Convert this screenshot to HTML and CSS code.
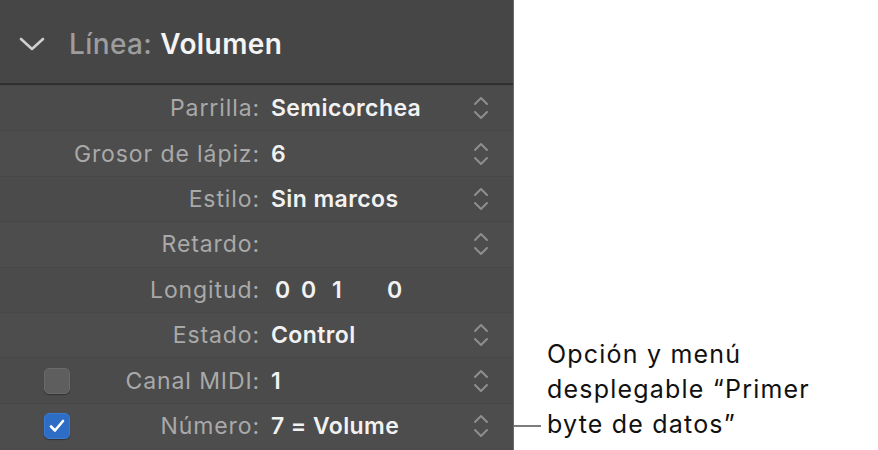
FILE: index.html
```html
<!DOCTYPE html>
<html lang="es">
<head>
    <meta charset="UTF-8">
    <meta name="viewport" content="width=device-width, initial-scale=1.0">
    <title>Línea: Volumen</title>
    <link rel="stylesheet" href="styles.css">
</head>
<body>
    <div class="page">
        <div class="inspector">
            <div class="inspector-head">
                <svg class="disclosure" width="26" height="14" viewBox="0 0 26 14">
                    <path d="M2 2 L13 12 L24 2" fill="none" stroke="#cfcfcf" stroke-width="2.6" stroke-linecap="round" stroke-linejoin="round"/>
                </svg>
                <span class="head-label">Línea:</span>
                <span class="head-value">Volumen</span>
            </div>

            <div class="row">
                <div class="label-cell"><span class="label">Parrilla:</span></div>
                <div class="value">Semicorchea</div>
                <svg class="stepper" width="16" height="24" viewBox="0 0 16 24"><path d="M2 8 L8 2 L14 8 M2 16 L8 22 L14 16" fill="none" stroke="#8e8e8e" stroke-width="2" stroke-linecap="round" stroke-linejoin="round"/></svg>
            </div>
            <div class="row alt">
                <div class="label-cell"><span class="label">Grosor de lápiz:</span></div>
                <div class="value">6</div>
                <svg class="stepper" width="16" height="24" viewBox="0 0 16 24"><path d="M2 8 L8 2 L14 8 M2 16 L8 22 L14 16" fill="none" stroke="#8e8e8e" stroke-width="2" stroke-linecap="round" stroke-linejoin="round"/></svg>
            </div>
            <div class="row">
                <div class="label-cell"><span class="label">Estilo:</span></div>
                <div class="value">Sin marcos</div>
                <svg class="stepper" width="16" height="24" viewBox="0 0 16 24"><path d="M2 8 L8 2 L14 8 M2 16 L8 22 L14 16" fill="none" stroke="#8e8e8e" stroke-width="2" stroke-linecap="round" stroke-linejoin="round"/></svg>
            </div>
            <div class="row alt">
                <div class="label-cell"><span class="label">Retardo:</span></div>
                <div class="value"></div>
                <svg class="stepper" width="16" height="24" viewBox="0 0 16 24"><path d="M2 8 L8 2 L14 8 M2 16 L8 22 L14 16" fill="none" stroke="#8e8e8e" stroke-width="2" stroke-linecap="round" stroke-linejoin="round"/></svg>
            </div>
            <div class="row">
                <div class="label-cell"><span class="label">Longitud:</span></div>
                <div class="value length">
                    <span class="seg">0</span><span class="seg mid">0</span><span class="seg wide">1</span><span class="seg">0</span>
                </div>
                <span></span>
            </div>
            <div class="row alt">
                <div class="label-cell"><span class="label">Estado:</span></div>
                <div class="value">Control</div>
                <svg class="stepper" width="16" height="24" viewBox="0 0 16 24"><path d="M2 8 L8 2 L14 8 M2 16 L8 22 L14 16" fill="none" stroke="#8e8e8e" stroke-width="2" stroke-linecap="round" stroke-linejoin="round"/></svg>
            </div>
            <div class="row">
                <div class="label-cell">
                    <span class="check"></span>
                    <span class="label">Canal MIDI:</span>
                </div>
                <div class="value">1</div>
                <svg class="stepper" width="16" height="24" viewBox="0 0 16 24"><path d="M2 8 L8 2 L14 8 M2 16 L8 22 L14 16" fill="none" stroke="#8e8e8e" stroke-width="2" stroke-linecap="round" stroke-linejoin="round"/></svg>
            </div>
            <div class="row alt">
                <div class="label-cell">
                    <span class="check on">
                        <svg width="18" height="16" viewBox="0 0 18 16"><path d="M3 8.5 L7 12.5 L15 3" fill="none" stroke="#fff" stroke-width="2.6" stroke-linecap="round" stroke-linejoin="round"/></svg>
                    </span>
                    <span class="label">Número:</span>
                </div>
                <div class="value">7 = Volume</div>
                <svg class="stepper" width="16" height="24" viewBox="0 0 16 24"><path d="M2 8 L8 2 L14 8 M2 16 L8 22 L14 16" fill="none" stroke="#8e8e8e" stroke-width="2" stroke-linecap="round" stroke-linejoin="round"/></svg>
            </div>
        </div>

        <div class="note">
            <span class="leader"></span>
            <p>Opción y menú<br>desplegable “Primer<br>byte de datos”</p>
        </div>
    </div>
</body>
</html>
```

FILE: styles.css
```css
body {
    margin: 0;
    background-color: white;
    font-family: Inter, "Noto Sans", sans-serif;
}
.page {
    display: flex;
    width: 878px;
    height: 450px;
    overflow: hidden;
}
.inspector {
    width: 513px;
    height: 450px;
    background-color: #4b4b4b;
    border-right: 1px solid #6b6b6b;
    flex-shrink: 0;
}
.inspector-head {
    height: 85px;
    background-color: #464646;
    border-bottom: 2px solid #2f2f2f;
    box-sizing: border-box;
    display: flex;
    align-items: center;
    padding-left: 19px;
    padding-top: 4px;
}
.disclosure {
    margin-right: 24px;
}
.head-label {
    font-size: 28px;
    font-weight: 500;
    letter-spacing: 0.4px;
    color: #9d9d9d;
    margin-right: 8px;
}
.head-value {
    font-size: 28px;
    font-weight: 600;
    letter-spacing: 0.4px;
    color: #f4f4f4;
}
.row {
    display: grid;
    grid-template-columns: 260px 1fr 16px;
    column-gap: 11px;
    align-items: center;
    height: 45.4px;
    padding-right: 24px;
    border-top: 1px solid #474747;
    box-sizing: border-box;
}
.row.alt {
    background-color: #4d4d4d;
}
.label-cell {
    display: flex;
    align-items: center;
    padding-left: 44px;
}
.label {
    margin-left: auto;
    font-size: 23px;
    letter-spacing: 0.9px;
    color: #a9a9a9;
}
.value {
    font-size: 23px;
    font-weight: 600;
    letter-spacing: 0.4px;
    color: #f2f2f2;
}
.length {
    display: flex;
    padding-left: 4px;
}
.seg {
    width: 26px;
}
.seg.mid {
    width: 31px;
}
.seg.wide {
    width: 55px;
}
.check {
    width: 26px;
    height: 26px;
    box-sizing: border-box;
    border-radius: 5px;
    background-color: #5e5e5e;
    border: 1px solid #6a6a6a;
    box-shadow: 0 1px 1px rgba(0, 0, 0, 0.35);
    display: flex;
    align-items: center;
    justify-content: center;
}
.check.on {
    background-color: #2d6dc6;
    border-color: #3a7ad2;
}
.note {
    align-self: flex-end;
    display: flex;
    align-items: flex-end;
    padding-bottom: 8px;
}
.leader {
    width: 27px;
    height: 2px;
    background-color: #7c7c7c;
    margin-bottom: 15px;
    margin-right: 6px;
}
.note p {
    margin: 0;
    font-size: 25px;
    letter-spacing: 1.2px;
    line-height: 35px;
    color: #111;
}
```
